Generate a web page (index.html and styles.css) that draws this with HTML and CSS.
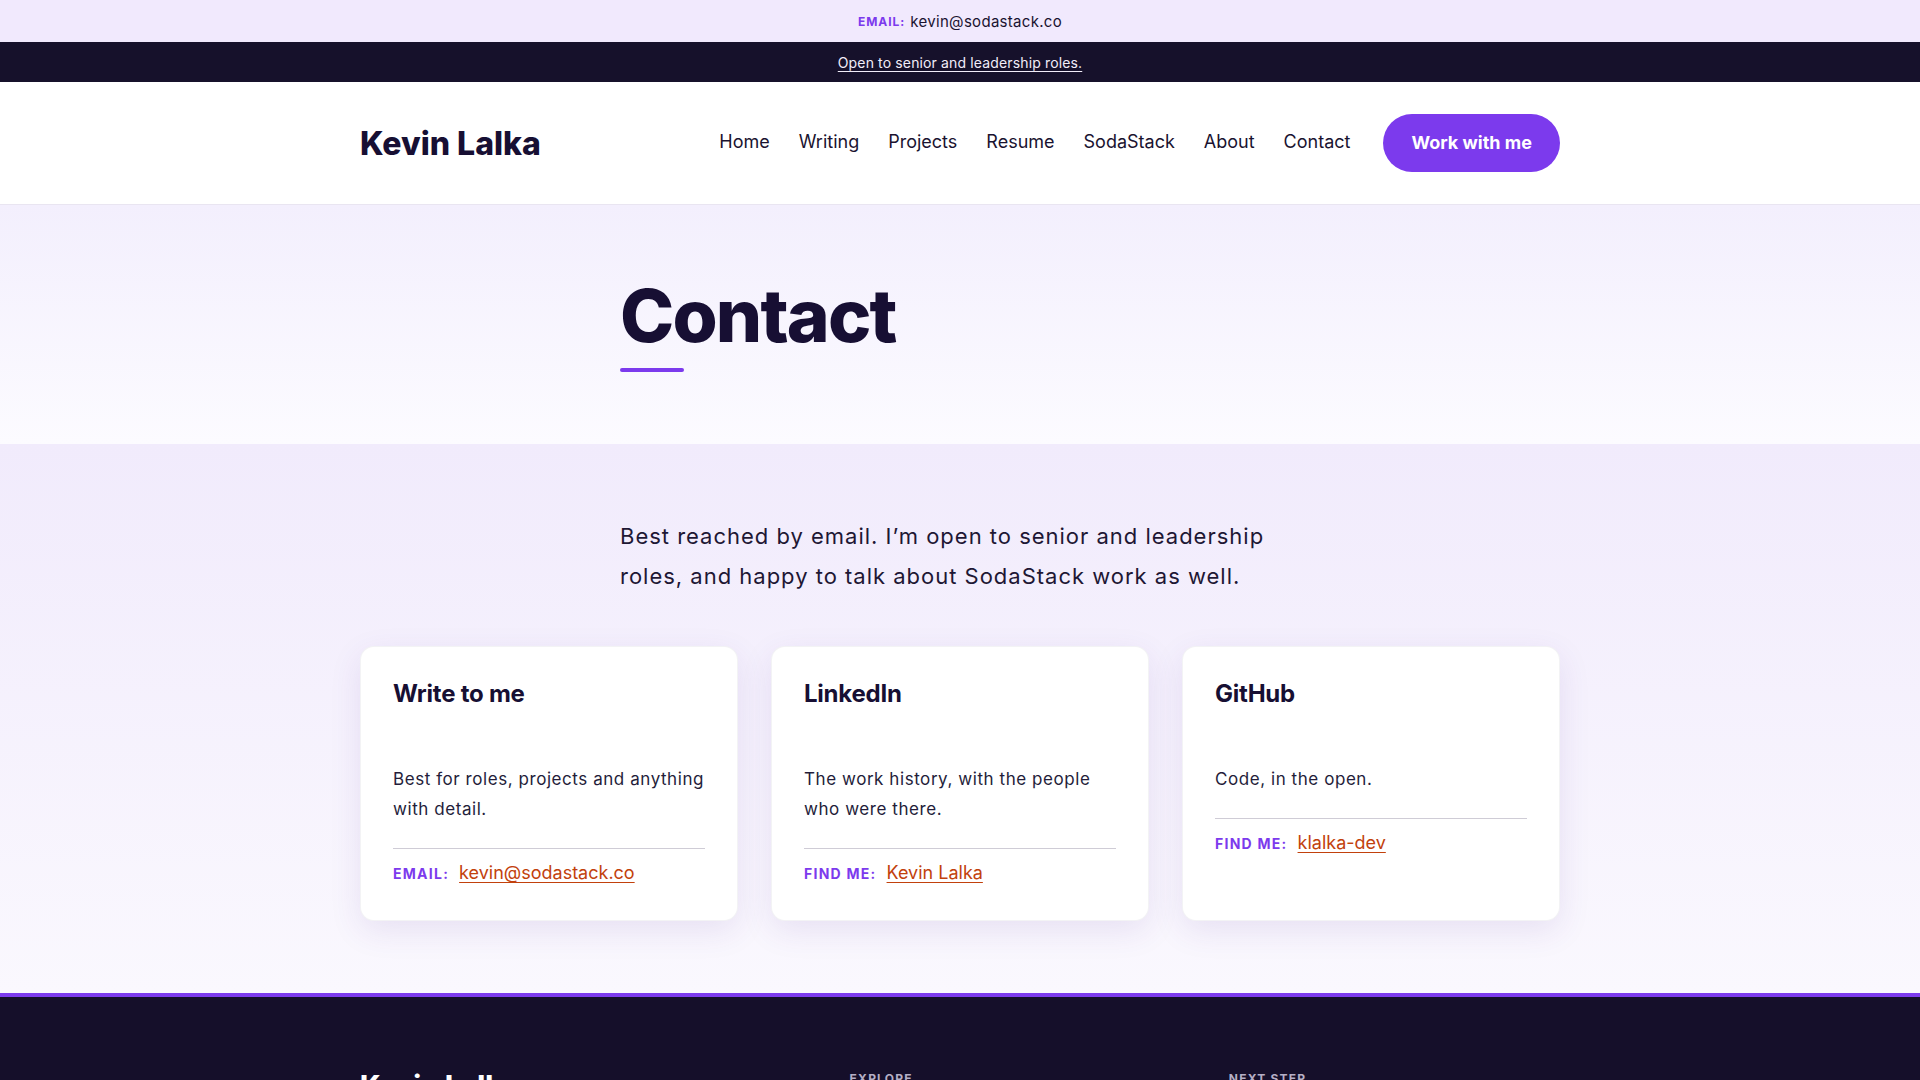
FILE: index.html
```html
<!DOCTYPE html>
<html lang="en">

    <head>
        <meta charset="UTF-8">
        <meta name="viewport" content="width=device-width, initial-scale=1.0">
        <title>Contact - Kevin Lalka</title>

        <link rel="stylesheet" href="styles.css">
    </head>

    <body>
        <div class="topbar">
            <span class="label">Email:</span>
            <a href="#" class="topbar-link">kevin@sodastack.co</a>
        </div>
        <div class="announce">
            <a href="#">Open to senior and leadership roles.</a>
        </div>

        <header class="site-header">
            <div class="container header-inner">
                <a href="#" class="logo">Kevin Lalka</a>
                <nav class="nav">
                    <a href="#">Home</a>
                    <a href="#">Writing</a>
                    <a href="#">Projects</a>
                    <a href="#">Resume</a>
                    <a href="#">SodaStack</a>
                    <a href="#">About</a>
                    <a href="#">Contact</a>
                    <a href="#" class="btn">Work with me</a>
                </nav>
            </div>
        </header>

        <section class="hero">
            <div class="narrow">
                <h1>Contact</h1>
                <span class="rule"></span>
            </div>
        </section>

        <main class="contact">
            <div class="narrow">
                <p class="intro">Best reached by email. I’m open to senior and leadership roles, and happy to talk about SodaStack work as well.</p>
            </div>
            <div class="container cards">
                <div class="card">
                    <h3>Write to me</h3>
                    <p>Best for roles, projects and anything with detail.</p>
                    <div class="card-meta">
                        <span class="label">Email:</span>
                        <a href="#">kevin@sodastack.co</a>
                    </div>
                </div>
                <div class="card">
                    <h3>LinkedIn</h3>
                    <p>The work history, with the people who were there.</p>
                    <div class="card-meta">
                        <span class="label">Find me:</span>
                        <a href="#">Kevin Lalka</a>
                    </div>
                </div>
                <div class="card">
                    <h3>GitHub</h3>
                    <p>Code, in the open.</p>
                    <div class="card-meta">
                        <span class="label">Find me:</span>
                        <a href="#">klalka-dev</a>
                    </div>
                </div>
            </div>
        </main>

        <footer class="site-footer">
            <div class="container footer-grid">
                <div>
                    <a href="#" class="logo">Kevin Lalka</a>
                    <p class="footer-text">Engineering leader and builder of SodaStack.</p>
                </div>
                <div>
                    <h4>Explore</h4>
                    <a href="#">Writing</a>
                    <a href="#">Projects</a>
                    <a href="#">Resume</a>
                </div>
                <div>
                    <h4>Next step</h4>
                    <a href="#">Work with me</a>
                    <a href="#">Contact</a>
                </div>
            </div>
        </footer>
    </body>

</html>
```

FILE: styles.css
```css
* {
    box-sizing: border-box;
}

body {
    margin: 0;
    font-family: Inter, "Noto Sans", sans-serif;
    color: #1a1330;
    background-color: #fff;
}

a {
    color: inherit;
    text-decoration: none;
}

.container {
    width: 1200px;
    margin: 0 auto;
}

.narrow {
    width: 680px;
    margin: 0 auto;
}

.label {
    font-weight: 700;
    text-transform: uppercase;
    letter-spacing: 0.08em;
    color: #7c3aed;
}

/* top strips */

.topbar {
    height: 42px;
    display: flex;
    align-items: center;
    justify-content: center;
    gap: 5px;
    background-color: #f1e9fd;
    font-size: 15px;
    letter-spacing: 0.02em;
}

.topbar .label {
    font-size: 12px;
}

.announce {
    height: 40px;
    display: flex;
    align-items: center;
    justify-content: center;
    background-color: #16112b;
    font-size: 14px;
}

.announce a {
    color: #f1edf9;
    text-decoration: underline;
    text-underline-offset: 3px;
    letter-spacing: 0.01em;
}

/* header */

.site-header {
    background-color: #fff;
    border-bottom: 1px solid #e9e5f1;
}

.header-inner {
    height: 122px;
    display: flex;
    align-items: center;
    justify-content: space-between;
}

.logo {
    font-size: 32px;
    font-weight: 800;
    letter-spacing: 0;
    color: #170f33;
}

.nav {
    display: flex;
    align-items: center;
    gap: 29px;
    font-size: 18px;
}

.nav a {
    color: #1a1330;
    margin-bottom: 4px;
}

.nav .btn {
    margin: 0 0 0 4px;
    padding: 15px 28px;
    line-height: 28px;
    border-radius: 999px;
    background-color: #7c3aed;
    color: #fff;
    font-weight: 700;
}

/* hero */

.hero {
    padding: 71px 0 72px;
    background: linear-gradient(180deg, #f3effd 0%, #fcfbff 100%);
}

.hero h1 {
    margin: 0;
    font-size: 73px;
    line-height: 1.1;
    font-weight: 800;
    letter-spacing: -0.025em;
    color: #170f33;
}

.rule {
    display: block;
    width: 64px;
    height: 4px;
    margin-top: 12px;
    border-radius: 2px;
    background-color: #7c3aed;
}

/* contact section */

.contact {
    padding: 72px 0 72px;
    background: linear-gradient(180deg, #f1ebfc 0%, #faf8fe 100%);
}

.intro {
    margin: 0 0 50px;
    font-size: 22px;
    line-height: 40px;
    letter-spacing: 0.045em;
    color: #1e1734;
}

.cards {
    display: grid;
    grid-template-columns: repeat(3, 1fr);
    gap: 33px;
}

.card {
    padding: 33px 32px 34px;
    background-color: #fff;
    border-radius: 14px;
    border: 1px solid rgba(23, 15, 51, 0.05);
    box-shadow: 0 10px 32px rgba(76, 40, 150, 0.1);
}

.card h3 {
    margin: 0 0 55px;
    font-size: 24px;
    line-height: 1.2;
    font-weight: 700;
    letter-spacing: -0.01em;
    color: #170f33;
}

.card p {
    margin: 0 0 24px;
    font-size: 17px;
    line-height: 30px;
    letter-spacing: 0.033em;
    color: #241d3a;
}

.card-meta {
    display: flex;
    align-items: baseline;
    gap: 10px;
    padding-top: 10px;
    border-top: 1px solid #cfccd6;
}

.card-meta .label {
    font-size: 14px;
    letter-spacing: 0.09em;
}

.card-meta a {
    font-size: 18px;
    line-height: 27px;
    color: #c2410c;
    text-decoration: underline;
    text-underline-offset: 3px;
    text-decoration-thickness: 1px;
}

/* footer */

.site-footer {
    padding: 72px 0 72px;
    background-color: #150f2a;
    border-top: 4px solid #7c3aed;
    color: #d6d1e4;
}

.footer-grid {
    display: grid;
    grid-template-columns: 4fr 3fr 3fr;
    gap: 48px;
}

.site-footer .logo {
    color: #fff;
    font-size: 28px;
}

.footer-text {
    margin: 12px 0 0;
    font-size: 16px;
    line-height: 1.6;
}

.site-footer h4 {
    margin: 2px 0 14px;
    font-size: 12px;
    letter-spacing: 0.1em;
    text-transform: uppercase;
    color: #b5afc6;
}

.site-footer div > a:not(.logo) {
    display: block;
    margin-bottom: 10px;
    font-size: 16px;
}
```
